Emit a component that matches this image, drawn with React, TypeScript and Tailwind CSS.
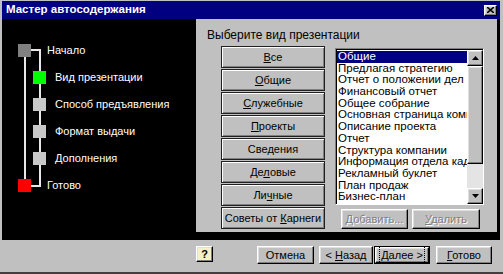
import React from "react";

const raised =
  "border border-t-white border-l-white border-r-black border-b-black shadow-[inset_-1px_-1px_0_#808080,inset_1px_1px_0_#dfdfdf]";

const steps = [
  { label: "Начало", kind: "start" },
  { label: "Вид презентации", kind: "current" },
  { label: "Способ предъявления", kind: "todo" },
  { label: "Формат выдачи", kind: "todo" },
  { label: "Дополнения", kind: "todo" },
  { label: "Готово", kind: "end" },
];

const categories: [string, string, string][] = [
  ["", "В", "се"],
  ["", "О", "бщие"],
  ["", "С", "лужебные"],
  ["", "П", "роекты"],
  ["Све", "д", "ения"],
  ["Де", "л", "овые"],
  ["Ли", "ч", "ные"],
  ["Советы от ", "К", "арнеги"],
];

const items = [
  "Общие",
  "Предлагая стратегию",
  "Отчет о положении дел",
  "Финансовый отчет",
  "Общее собрание",
  "Основная страница компании",
  "Описание проекта",
  "Отчет",
  "Структура компании",
  "Информация отдела кадров",
  "Рекламный буклет",
  "План продаж",
  "Бизнес-план",
];

function Mnemonic({ parts }: { parts: [string, string, string] }) {
  return (
    <span>
      {parts[0]}
      <span className="underline underline-offset-1">{parts[1]}</span>
      {parts[2]}
    </span>
  );
}

function ArrowUp() {
  return (
    <svg width="7" height="4" viewBox="0 0 7 4">
      <path d="M3.5 0L7 4H0z" fill="black" />
    </svg>
  );
}

function ArrowDown() {
  return (
    <svg width="7" height="4" viewBox="0 0 7 4">
      <path d="M0 0h7L3.5 4z" fill="black" />
    </svg>
  );
}

export default function App() {
  return (
    <div
      className="w-[503px] h-[274px] bg-[#c0c0c0] flex flex-col pl-[2px] pr-[3px] pt-[1px] border-b-2 border-b-[#404040] overflow-hidden text-[11px] text-black"
      style={{ fontFamily: '"Liberation Sans", Arial, sans-serif' }}
    >
      {/* title bar */}
      <div className="h-[18px] bg-[#000080] flex items-center justify-between pl-[4px] pr-[3px]">
        <span className="text-white font-bold text-[11.5px]">Мастер автосодержания</span>
        <div className={`w-[13px] h-[11px] bg-[#c0c0c0] flex items-center justify-center ${raised}`}>
          <svg width="7" height="6" viewBox="0 0 7 6">
            <path d="M0 0L7 6M7 0L0 6" stroke="black" strokeWidth="1.6" />
          </svg>
        </div>
      </div>

      {/* body */}
      <div className="h-[221px] bg-black flex">
        {/* steps */}
        <div className="relative w-[194px] pt-[18px] text-white">
          <div className="absolute left-[22px] top-[37px] w-[2px] h-[123px] bg-[#e8e8e8]" />
          <div className="absolute left-[37px] top-[31px] w-[2px] h-[137px] bg-[#e8e8e8]" />
          <div className="absolute left-[29px] top-[30px] w-[10px] h-[2px] bg-[#e8e8e8]" />
          <div className="absolute left-[29px] top-[166px] w-[10px] h-[2px] bg-[#e8e8e8]" />
          {steps.map((s) => {
            const edge = s.kind === "start" || s.kind === "end";
            const color =
              s.kind === "start"
                ? "bg-[#808080]"
                : s.kind === "end"
                ? "bg-[#ff0000]"
                : s.kind === "current"
                ? "bg-[#00ff00]"
                : "bg-[#c8c8c8]";
            return (
              <div key={s.label} className="relative h-[27px] flex items-center">
                <div className={`${edge ? "ml-[16px]" : "ml-[31px]"} w-[13px] h-[13px] ${color}`} />
                <span className={edge ? "ml-[16px]" : "ml-[9px]"}>{s.label}</span>
              </div>
            );
          })}
        </div>

        {/* content panel */}
        <div className="flex-1 h-[213px] bg-[#c0c0c0] mr-[3px] pl-[11px] pt-[9px]">
          <div className="h-[14px] leading-[14px] text-[12px]">Выберите вид презентации</div>
          <div className="flex mt-[4px] ml-[14px] gap-[10px]">
            <div className="flex flex-col gap-[1px] w-[104px]">
              {categories.map((c) => (
                <div
                  key={c.join("")}
                  className="h-[22px] border border-[#202020] bg-[#c0c0c0] shadow-[inset_1px_1px_0_#fff,inset_-1px_-1px_0_#808080] flex items-center justify-center"
                >
                  <Mnemonic parts={c} />
                </div>
              ))}
            </div>
            <div className="mt-[2px] flex flex-col">
              <div className="w-[149px] h-[157px] flex border border-t-[#808080] border-l-[#808080] border-r-white border-b-white">
                <div className="flex-1 bg-white border-t border-l border-black overflow-hidden pt-[1px] text-[11.5px]">
                  {items.map((it, i) => (
                    <div
                      key={it}
                      className={`h-[11.7px] leading-[11.7px] whitespace-nowrap pl-[1px] ${
                        i === 0 ? "bg-[#000080] text-white" : ""
                      }`}
                    >
                      {it}
                    </div>
                  ))}
                </div>
                <div className="w-[16px] flex flex-col bg-[#e4e4e4] border-t border-black">
                  <div className={`h-[16px] bg-[#c0c0c0] flex items-center justify-center ${raised}`}>
                    <ArrowUp />
                  </div>
                  <div className={`h-[98px] bg-[#c0c0c0] ${raised}`} />
                  <div className="flex-1" />
                  <div className={`h-[16px] bg-[#c0c0c0] flex items-center justify-center ${raised}`}>
                    <ArrowDown />
                  </div>
                </div>
              </div>
              <div className="flex gap-[4px] mt-[4px] ml-[6px] text-[#808080] [text-shadow:1px_1px_0_#fff]">
                <div className={`w-[67px] h-[20px] bg-[#c0c0c0] flex items-center justify-center ${raised}`}>
                  <span>
                    <span className="underline underline-offset-1">Д</span>обавить...
                  </span>
                </div>
                <div className={`w-[68px] h-[20px] bg-[#c0c0c0] flex items-center justify-center ${raised}`}>
                  <span>
                    <span className="underline underline-offset-1">У</span>далить
                  </span>
                </div>
              </div>
            </div>
          </div>
        </div>
      </div>

      {/* bottom bar */}
      <div className="flex items-start pt-[6px]">
        <div className={`ml-[194px] w-[17px] h-[16px] bg-[#f4f0c8] flex items-center justify-center font-bold text-[11px] ${raised}`}>
          ?
        </div>
        <div className={`ml-[44px] w-[57px] h-[18px] bg-[#c0c0c0] flex items-center justify-center ${raised}`}>
          Отмена
        </div>
        <div className={`ml-[5px] w-[54px] h-[18px] bg-[#c0c0c0] flex items-center justify-center ${raised}`}>
          <span>
            &lt; <span className="underline underline-offset-1">Н</span>азад
          </span>
        </div>
        <div className="ml-[1px] w-[56px] h-[18px] border border-black flex">
          <div className={`flex-1 bg-[#c0c0c0] flex items-center justify-center ${raised}`}>
            <span className="outline outline-1 outline-dotted outline-black px-[1px]">
              <span className="underline underline-offset-1">Д</span>алее &gt;
            </span>
          </div>
        </div>
        <div className={`ml-[6px] w-[56px] h-[18px] bg-[#c0c0c0] flex items-center justify-center ${raised}`}>
          <span>
            <span className="underline underline-offset-1">Г</span>отово
          </span>
        </div>
      </div>
    </div>
  );
}
